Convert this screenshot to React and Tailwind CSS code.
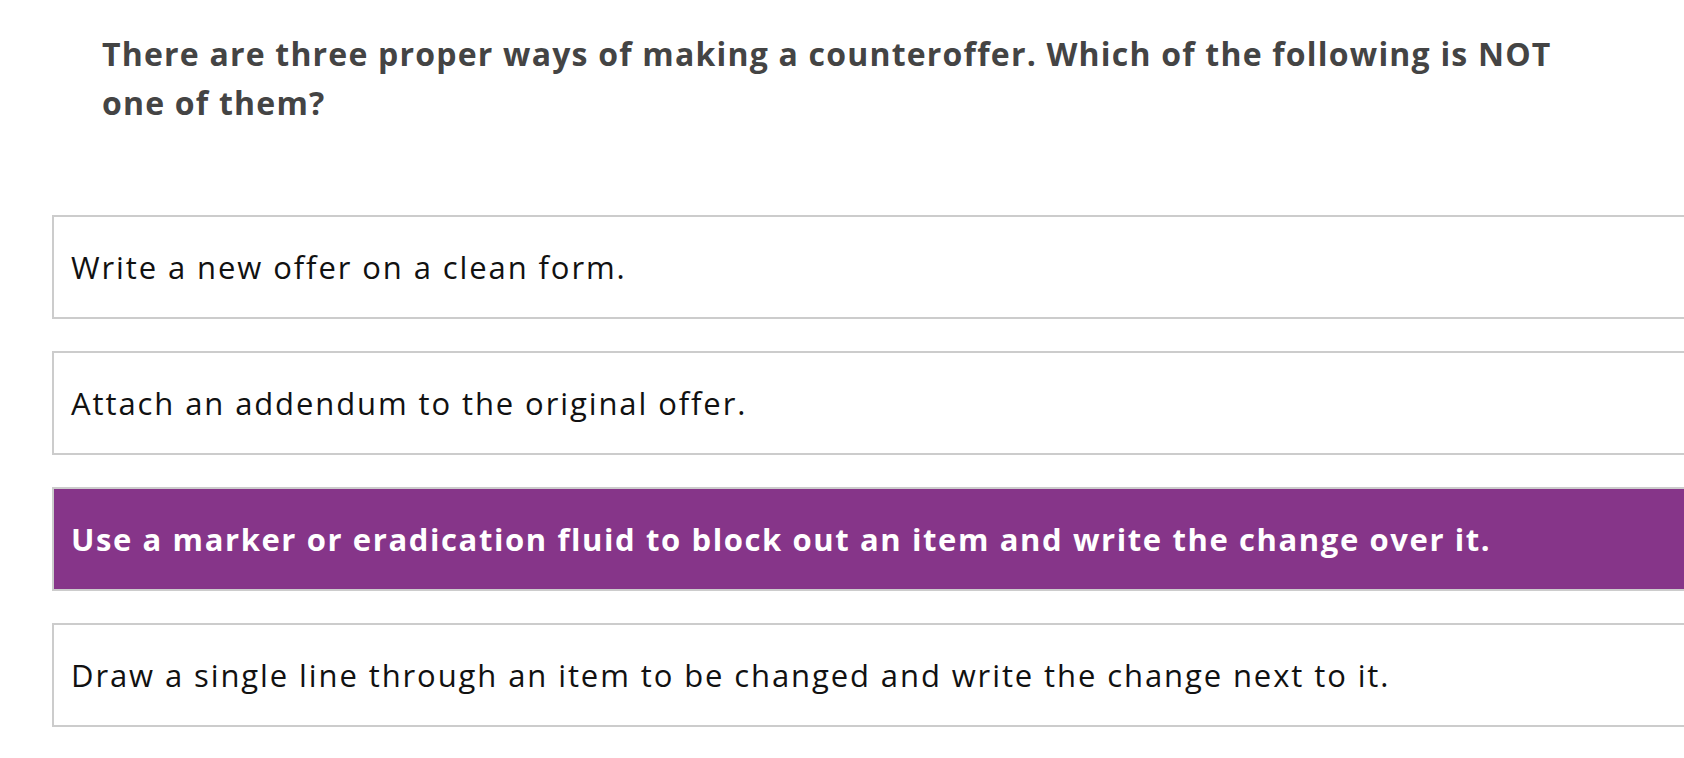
const QUESTION =
  'There are three proper ways of making a counteroffer. Which of the following is NOT one of them?';

const OPTIONS = [
  { text: 'Write a new offer on a clean form.', selected: false },
  { text: 'Attach an addendum to the original offer.', selected: false },
  { text: 'Use a marker or eradication fluid to block out an item and write the change over it.', selected: true },
  { text: 'Draw a single line through an item to be changed and write the change next to it.', selected: false },
];

export default function App() {
  return (
    <div className="w-full h-[758px] overflow-hidden bg-white font-['Open_Sans','Liberation_Sans',sans-serif]">
      <div className="pt-[29px] pl-[102px] w-[1590px]">
        <h1 className="w-[1480px] text-[32px] leading-[49px] font-bold tracking-[1.2px] text-[#444444]">
          {QUESTION}
        </h1>
      </div>

      <div className="mt-[88px] pl-[52px] flex flex-col gap-[32px]">
        {OPTIONS.map((o) => (
          <div
            key={o.text}
            className={`w-[1700px] h-[104px] border-2 border-[#cccccc] flex items-center px-[17px] ${
              o.selected
                ? 'bg-[#863589] text-white font-bold tracking-[1.6px]'
                : 'bg-white text-[#111111] tracking-[1.9px]'
            }`}
          >
            <span className="text-[31px]">{o.text}</span>
          </div>
        ))}
      </div>
    </div>
  );
}
